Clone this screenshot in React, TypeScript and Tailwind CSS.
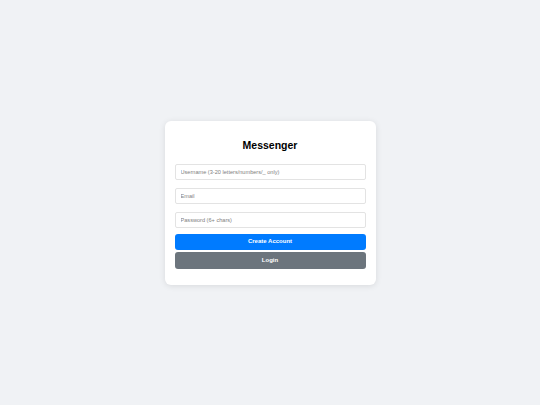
export default function App() {
  return (
    <div className="min-h-screen w-full bg-[#f0f2f5] flex items-center justify-center" style={{ fontFamily: '"Liberation Sans", Arial, sans-serif' }}>
      <div className="w-[211px] bg-white rounded-[6px] shadow-[0_1px_6px_rgba(0,0,0,0.10)] px-[10px] pt-[17px] pb-[16px] flex flex-col">
        <h1 className="text-[10.5px] leading-[14px] font-bold text-black text-center mb-[12px]">Messenger</h1>
        <div className="flex flex-col gap-[8px]">
          <input className="h-[16px] w-full border border-[#e3e3e3] rounded-[2px] px-[5px] text-[5.6px] placeholder:text-[#808080] outline-none" placeholder="Username (3-20 letters/numbers/_ only)" />
          <input className="h-[16px] w-full border border-[#e3e3e3] rounded-[2px] px-[5px] text-[5.6px] placeholder:text-[#808080] outline-none" placeholder="Email" />
          <input className="h-[16px] w-full border border-[#e3e3e3] rounded-[2px] px-[5px] text-[5.6px] placeholder:text-[#808080] outline-none" placeholder="Password (6+ chars)" />
        </div>
        <button className="mt-[6px] h-[16.5px] w-full rounded-[3px] bg-[#007bff] text-white text-[6px] font-bold">Create Account</button>
        <button className="mt-[2px] h-[16.5px] w-full rounded-[3px] bg-[#6c757d] text-white text-[6px] font-bold">Login</button>
      </div>
    </div>
  );
}
